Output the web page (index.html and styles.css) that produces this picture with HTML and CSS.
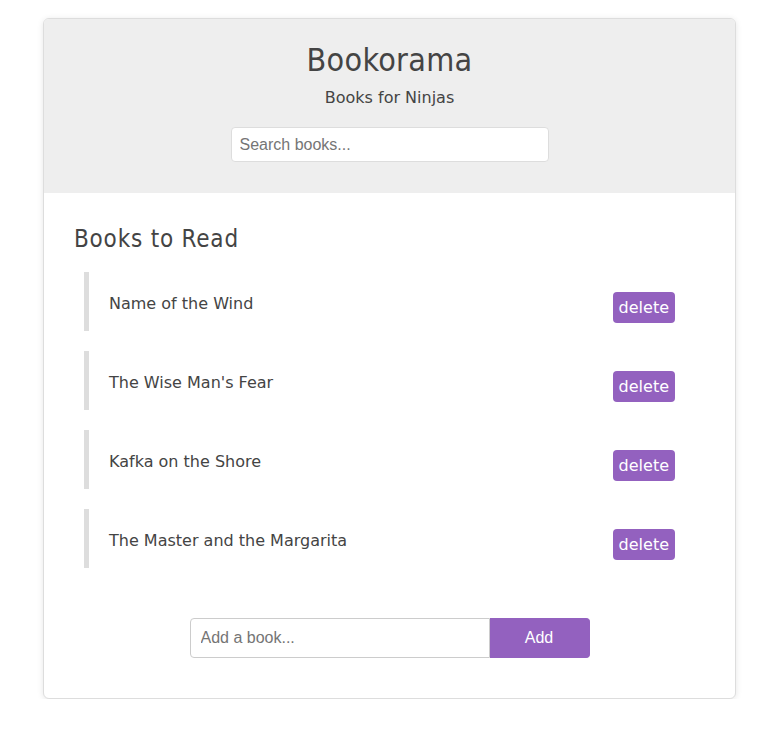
FILE: index.html
```html
<!DOCTYPE html>
<html>
<head>
<meta charset="utf-8">
<title>Bookorama</title>
<link rel="stylesheet" href="styles.css">
</head>
<body>
<div class="wrapper">
  <header class="page-banner">
    <h1 class="title">Bookorama</h1>
    <p class="subtitle">Books for Ninjas</p>
    <form class="search-books">
      <input class="search-input" type="text" placeholder="Search books...">
    </form>
  </header>
  <div class="book-list">
    <h2 class="list-title">Books to Read</h2>
    <ul class="books">
      <li class="book"><span class="delete">delete</span><span class="name">Name of the Wind</span></li>
      <li class="book"><span class="delete">delete</span><span class="name">The Wise Man's Fear</span></li>
      <li class="book"><span class="delete">delete</span><span class="name">Kafka on the Shore</span></li>
      <li class="book"><span class="delete">delete</span><span class="name">The Master and the Margarita</span></li>
    </ul>
  </div>
  <form class="add-book">
    <input class="add-input" type="text" placeholder="Add a book...">
    <button class="add-button" type="button">Add</button>
  </form>
</div>
</body>
</html>
```

FILE: styles.css
```css
html, body {
  margin: 0;
  background: #fff;
}
body {
  font-family: "DejaVu Sans", sans-serif;
  color: #444;
  padding: 18px 0 0 43px;
}
.wrapper {
  width: 693px;
  box-sizing: border-box;
  border: 1px solid #ddd;
  border-radius: 6px;
  box-shadow: 0 1px 6px rgba(0, 0, 0, 0.1);
  padding: 0 0 20px;
  background: #fff;
  overflow: hidden;
}
.page-banner {
  background: #eee;
  padding: 10px 0 11px;
  display: flow-root;
}
.title {
  margin: 12px 0 0;
  text-align: center;
  font-family: "DejaVu Sans Condensed", "DejaVu Sans", sans-serif;
  font-size: 32px;
  font-weight: normal;
  line-height: 39px;
  letter-spacing: 0.3px;
}
.subtitle {
  margin: 8px 0 20px;
  text-align: center;
  font-size: 16px;
  line-height: 19px;
}
.search-books {
  margin: 0;
}
.search-input {
  display: block;
  width: 318px;
  height: 35px;
  box-sizing: border-box;
  margin: 20px auto;
  padding: 8px;
  border: 1px solid #ddd;
  border-radius: 4px;
  font-family: "Liberation Sans", Arial, sans-serif;
  font-size: 16px;
  color: #444;
  background: #fff;
}
.search-input::placeholder,
.add-input::placeholder {
  color: #757575;
}
.book-list {
  margin: 30px;
}
.list-title {
  margin: 0;
  padding-top: 2px;
  font-family: "DejaVu Sans Condensed", "DejaVu Sans", sans-serif;
  font-size: 24px;
  font-weight: normal;
  line-height: 29px;
  letter-spacing: 0.8px;
}
.books {
  list-style: none;
  padding: 0;
  margin: 18px 0 0;
}
.book {
  padding: 22px 20px 18px;
  margin: 0 10px;
  border-left: 5px solid #ddd;
  font-size: 16px;
  line-height: 19px;
}
.book + .book {
  margin-top: 20px;
}
.name {
  display: block;
}
.delete {
  float: right;
  margin-top: -2px;
  background: #9361bf;
  color: #fff;
  padding: 6px;
  border-radius: 4px;
  font-size: 16px;
  line-height: 19px;
  cursor: pointer;
}
.add-book {
  display: flex;
  width: 400px;
  margin: 50px auto 20px;
}
.add-input {
  width: 300px;
  height: 40px;
  box-sizing: border-box;
  padding: 10px;
  border: 1px solid #ccc;
  border-radius: 4px 0 0 4px;
  font-family: "Liberation Sans", Arial, sans-serif;
  font-size: 16px;
  color: #444;
  margin: 0;
}
.add-button {
  width: 100px;
  height: 40px;
  box-sizing: border-box;
  margin: 0;
  border: 1px solid #9361bf;
  border-left: 0;
  background: #9361bf;
  color: #fff;
  border-radius: 0 4px 4px 0;
  font-family: "Liberation Sans", Arial, sans-serif;
  font-size: 16px;
  padding: 10px 20px;
  cursor: pointer;
}
```
